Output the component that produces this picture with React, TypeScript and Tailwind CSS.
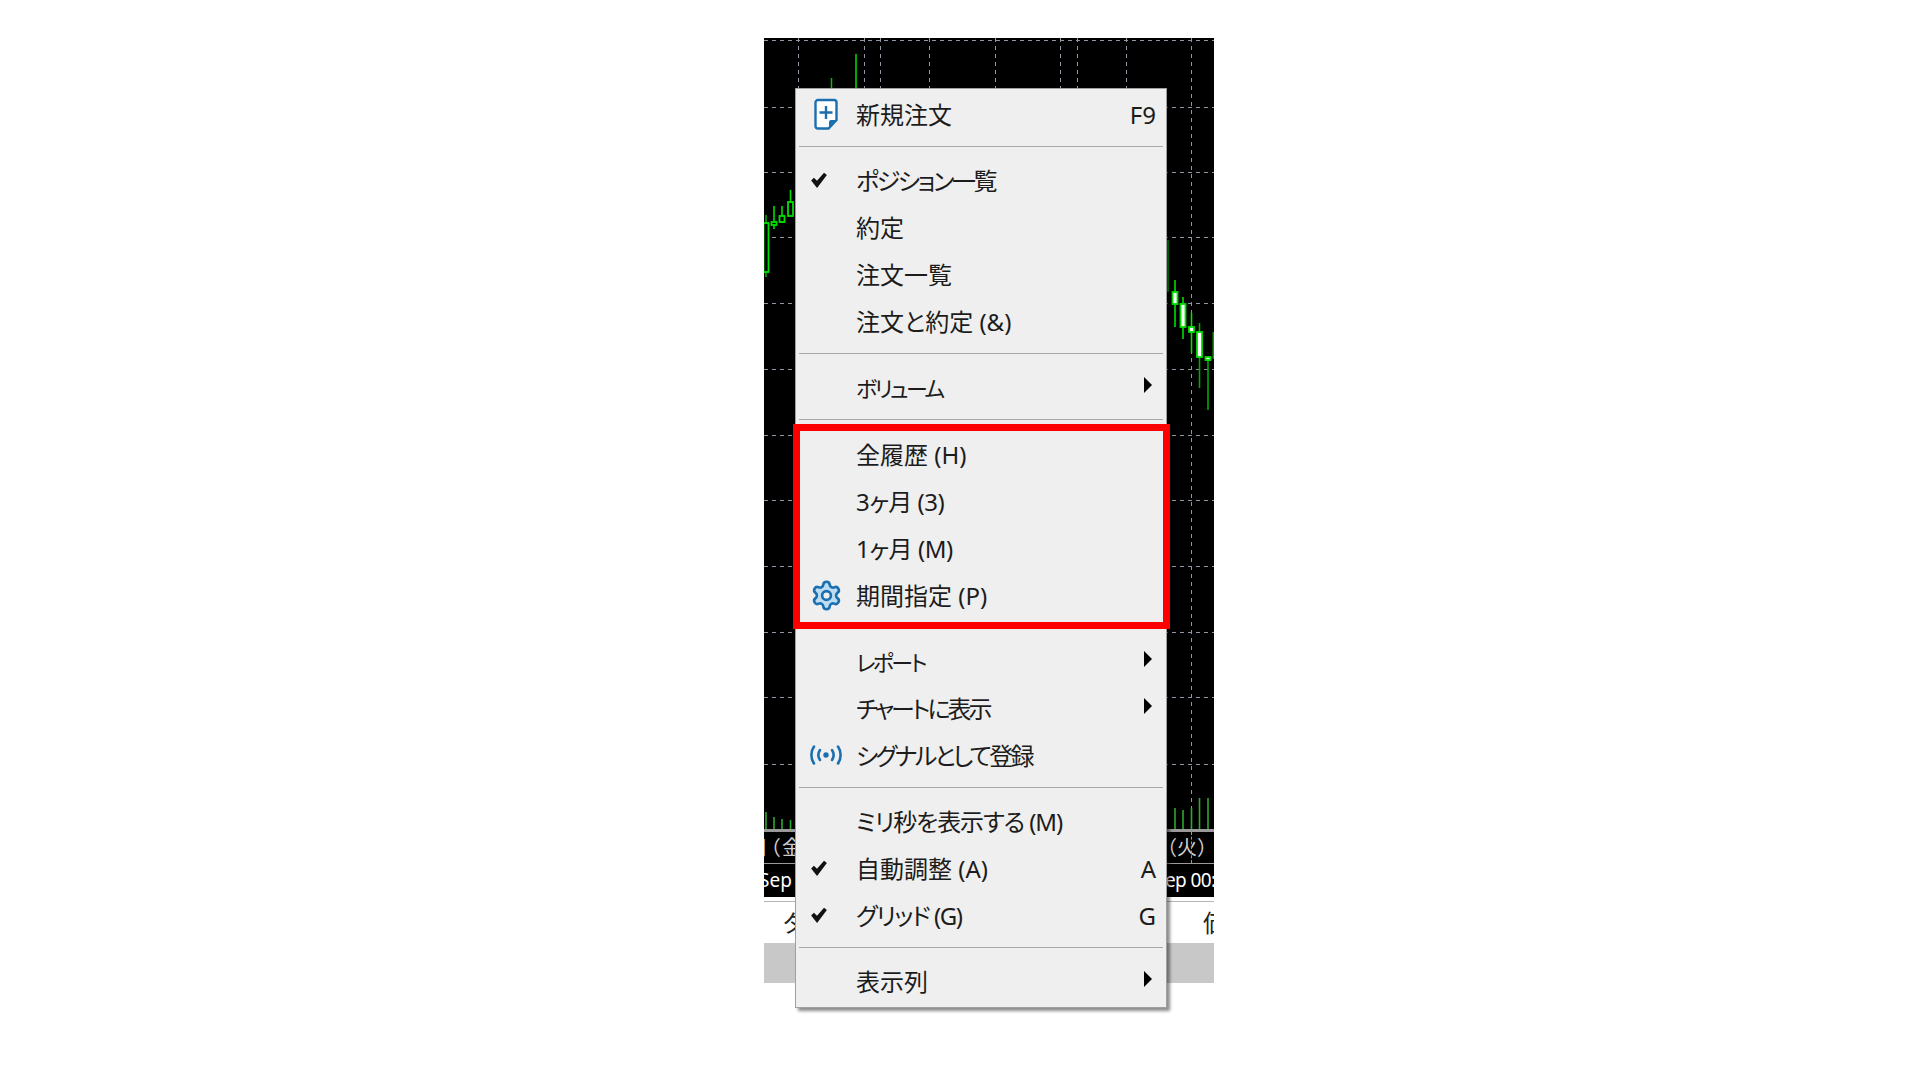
import type { ReactNode } from "react";

const FONT = "font-['Noto_Sans','Noto_Sans_CJK_JP',sans-serif]";

const H_LINES = [40, 107, 172, 237, 303, 369, 435, 500, 566, 632, 697, 764];
const V_LINES = [798, 864, 880, 929, 995, 1060, 1077, 1126, 1191];

// x, wick top/bottom, body top/bottom (page coordinates, shifted below)
const CANDLES = [
  { x: 766, w1: 215, w2: 277, b1: 223, b2: 272, solid: false, dim: true },
  { x: 774, w1: 206, w2: 229, b1: 222, b2: 225, solid: false, dim: false },
  { x: 782, w1: 206, w2: 223, b1: 216, b2: 222, solid: false, dim: false },
  { x: 790.5, w1: 190, w2: 216, b1: 202, b2: 216, solid: false, dim: false },
  { x: 1175, w1: 280, w2: 327, b1: 292, b2: 304, solid: true, dim: false },
  { x: 1183, w1: 297, w2: 339, b1: 304, b2: 327, solid: true, dim: false },
  { x: 1191.5, w1: 313, w2: 353, b1: 327, b2: 332, solid: true, dim: false },
  { x: 1199.5, w1: 323, w2: 388, b1: 332, b2: 357, solid: true, dim: true },
  { x: 1208, w1: 357, w2: 410, b1: 357, b2: 360, solid: true, dim: true },
];

const VOLUMES = [
  [766, 812],
  [774, 817],
  [782, 819],
  [790.5, 820],
  [1175, 808],
  [1183, 810],
  [1191.5, 808],
  [1199.5, 798],
  [1208, 798],
];

function Chart() {
  const ox = 764;
  const oy = 38;
  return (
    <svg width="450" height="791" viewBox="764 38 450 791" className="block">
      <rect x={ox} y={oy} width="450" height="791" fill="#000" />
      {H_LINES.map((y) => (
        <line key={y} x1={ox} x2={ox + 450} y1={y + 0.5} y2={y + 0.5} stroke="#8d97a3" strokeDasharray="4 4" />
      ))}
      {V_LINES.map((x) => (
        <line key={x} x1={x + 0.5} x2={x + 0.5} y1={oy} y2={829} stroke="#8d97a3" strokeDasharray="4 4" />
      ))}
      <line x1="831.5" x2="831.5" y1="78" y2="90" stroke="#00c000" strokeWidth="1.5" />
      <line x1="856" x2="856" y1="54" y2="90" stroke="#00a800" strokeWidth="2" />
      <line x1="1168" x2="1168" y1="240" y2="292" stroke="#008c00" strokeWidth="2" />
      <line x1="1213.5" x2="1213.5" y1="332" y2="359" stroke="#00a000" strokeWidth="2" />
      {CANDLES.map((c) => {
        const col = c.dim ? "#00a800" : "#00e000";
        return (
          <g key={c.x}>
            <line x1={c.x} x2={c.x} y1={c.w1} y2={c.w2} stroke={col} strokeWidth="1.6" />
            <rect
              x={c.x - 2.5}
              y={c.b1}
              width="5"
              height={c.b2 - c.b1}
              fill={c.solid ? "#fff" : "#000"}
              stroke="#00e000"
              strokeWidth="1.8"
            />
          </g>
        );
      })}
      {VOLUMES.map(([x, top]) => (
        <line key={x} x1={x} x2={x} y1={top} y2="829" stroke="#2ea82e" strokeWidth="1.6" />
      ))}
    </svg>
  );
}

function DocPlus() {
  return (
    <svg width="24" height="32" viewBox="0 0 24 32" fill="none" className="-mt-[2px]">
      <path
        d="M4 2h16a2.5 2.5 0 0 1 2.5 2.5V22l-8 8.500H4A2.500 2.500 0 0 1 1.500 28V4.500A2.500 2.500 0 0 1 4 2z"
        fill="#fff"
        stroke="#1a6fb0"
        strokeWidth="2.400"
      />
      <path d="M15 30v-6a2 2 0 0 1 2-2h6z" fill="#1a6fb0" />
      <path d="M12 8v13M5.500 14.500h13" stroke="#1a6fb0" strokeWidth="2.400" />
    </svg>
  );
}

function Check() {
  return (
    <svg width="18" height="18" viewBox="0 0 16 16" className="-ml-[14px] -mt-[2px]">
      <path d="M1 8.500l2.500-2.500 2.700 2.700L12.500 1.500 15 3.500 6.300 15z" fill="#111" />
    </svg>
  );
}

function Gear() {
  return (
    <svg width="33" height="33" viewBox="0 0 24 24" fill="#bcdcf4" stroke="#1a6fb0" strokeWidth="1.900" strokeLinejoin="round">
      <path d="M9.671 4.136a2.34 2.34 0 0 1 4.659 0 2.34 2.34 0 0 0 3.319 1.915 2.34 2.34 0 0 1 2.33 4.033 2.34 2.34 0 0 0 0 3.831 2.34 2.34 0 0 1-2.33 4.033 2.34 2.34 0 0 0-3.319 1.915 2.34 2.34 0 0 1-4.659 0 2.34 2.34 0 0 0-3.32-1.915 2.34 2.34 0 0 1-2.33-4.033 2.34 2.34 0 0 0 0-3.831A2.34 2.34 0 0 1 6.35 6.051a2.34 2.34 0 0 0 3.319-1.915" />
      <circle cx="12" cy="12" r="3.200" fill="#efefef" />
    </svg>
  );
}

function Signal() {
  return (
    <svg width="34" height="20" viewBox="0 0 34 20" fill="none" stroke="#1a6fb0" strokeWidth="2.600" strokeLinecap="round" className="-mt-[1px]">
      <path d="M5 1.500C1.500 6.500 1.500 13.500 5 18.500" />
      <path d="M29 1.500C32.500 6.500 32.500 13.500 29 18.500" />
      <path d="M11 5C9 8 9 12 11 15" />
      <path d="M23 5C25 8 25 12 23 15" />
      <circle cx="17" cy="10" r="2.700" fill="#1a6fb0" stroke="none" />
    </svg>
  );
}

function Arrow() {
  return (
    <svg width="8" height="16" viewBox="0 0 8 16" className="-mt-[6px] mr-[4px]">
      <path d="M0 0l8 8-8 8z" fill="#000" />
    </svg>
  );
}

function Row({ icon, label, right, track }: { icon?: ReactNode; label: string; right?: ReactNode; track?: string }) {
  return (
    <div className="flex h-[47px] items-center pr-[10px] text-[24px] leading-none text-[#1c1c1c] [font-feature-settings:'palt']">
      <div className="flex w-[60px] shrink-0 items-center justify-center">{icon}</div>
      <span className={`whitespace-nowrap ${track ?? ""}`}>{label}</span>
      <span className="ml-auto">{right}</span>
    </div>
  );
}

function Sep({ wide }: { wide?: boolean }) {
  return (
    <div className={`flex items-start px-[3px] pt-[8px] ${wide ? "h-[20px]" : "h-[19px]"}`}>
      <div className="h-px w-full bg-[#a8a8a8]" />
    </div>
  );
}

function ContextMenu() {
  return (
    <div className="absolute left-[795px] top-[88px] w-[372px] border border-[#a0a0a0] bg-[#efefef] pt-[2px] pb-[2px] shadow-[3px_3px_3px_rgba(0,0,0,0.45)]">
      <Row icon={<DocPlus />} label="新規注文" right="F9" />
      <Sep />
      <Row icon={<Check />} label="ポジション一覧" track="tracking-[-2.4px]" />
      <Row label="約定" />
      <Row label="注文一覧" />
      <Row label="注文と約定 (&)" />
      <Sep />
      <Row label="ボリューム" right={<Arrow />} track="text-[22px] tracking-[-2.6px]" />
      <Sep wide />
      <Row label="全履歴 (H)" />
      <Row label="3ヶ月 (3)" track="tracking-[-0.5px]" />
      <Row label="1ヶ月 (M)" track="tracking-[-0.4px]" />
      <Row icon={<Gear />} label="期間指定 (P)" />
      <Sep />
      <Row label="レポート" right={<Arrow />} track="text-[22px] tracking-[-2.6px]" />
      <Row label="チャートに表示" right={<Arrow />} track="tracking-[-3px]" />
      <Row icon={<Signal />} label="シグナルとして登録" track="tracking-[-2.7px]" />
      <Sep />
      <Row label="ミリ秒を表示する (M)" track="tracking-[-1.1px]" />
      <Row icon={<Check />} label="自動調整 (A)" right="A" />
      <Row icon={<Check />} label="グリッド (G)" track="tracking-[-1.5px]" right="G" />
      <Sep />
      <Row label="表示列" right={<Arrow />} />
    </div>
  );
}

export default function App() {
  return (
    <div className={`relative h-screen w-full overflow-hidden bg-white pl-[764px] pt-[38px] ${FONT}`}>
      <div className="w-[450px]">
        <Chart />
        <div className="h-[3px] bg-[#9a9a9a]" />
        <div className="relative flex h-[31px] items-center justify-between overflow-hidden bg-black text-[20px] text-[#cfcfcf]">
          <span className="-ml-[16px] whitespace-nowrap tracking-[2px] [font-feature-settings:'palt']">日（金</span>
          <span className="-mr-[3px] whitespace-nowrap">（火）</span>
          <div className="absolute left-[427px] top-0 h-full border-l border-dashed border-[#8d97a3]" />
        </div>
        <div className="h-px bg-[#9a9a9a]" />
        <div className="flex h-[33px] items-center justify-between overflow-hidden bg-black text-[19px] text-white">
          <span className="-ml-[5px] whitespace-nowrap">Sep</span>
          <span className="-mr-[22px] whitespace-nowrap tracking-[-0.6px]">ep 00:00</span>
        </div>
        <div className="h-[4px] bg-white" />
        <div className="h-px bg-[#b5b5b5]" />
        <div className="flex h-[41px] items-center justify-between overflow-hidden pl-[18px] text-[24px] text-[#222]">
          <span className="whitespace-nowrap">タイプ</span>
          <span className="-mr-[37px] whitespace-nowrap">価格</span>
        </div>
        <div className="h-[40px] bg-[#c8c8c8]" />
      </div>
      <ContextMenu />
      <div className="absolute left-[793px] top-[424px] h-[205px] w-[377px] border-[7px] border-[#ff0000]" />
    </div>
  );
}
